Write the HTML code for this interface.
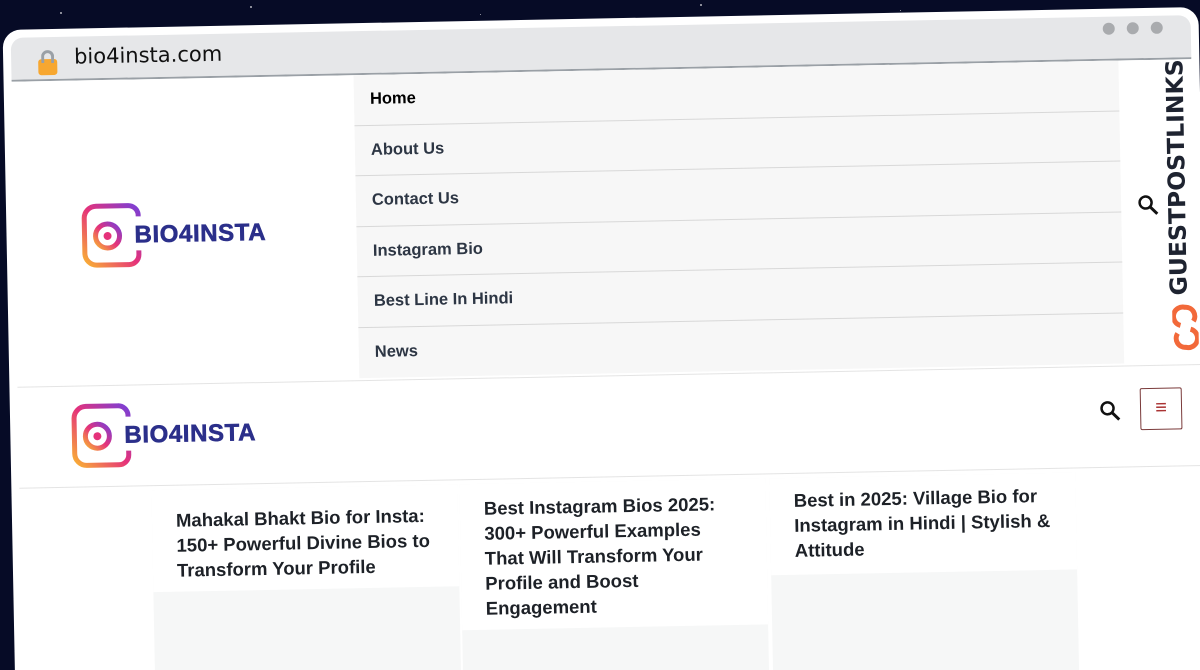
<!DOCTYPE html>
<html style="overflow:hidden;width:1200px;height:670px"><head><meta charset="utf-8"><style>
*{margin:0;padding:0;box-sizing:border-box}
body{width:1200px;height:670px;overflow:hidden;background:#060b26;font-family:"Liberation Sans",sans-serif;position:relative}
.star{position:absolute;background:#fff;border-radius:50%;opacity:.7}
#f{position:absolute;left:0;top:0;width:1200px;height:720px;overflow:hidden;transform-origin:0 0;transform:rotate(-1.1deg)}
.frame{position:absolute;left:2px;top:30px;width:1196px;height:720px;background:#fff;border-radius:18px}
.bar{position:absolute;left:10px;top:38px;width:1180px;height:44px;background:#e6e7e9;border-radius:12px 12px 0 0;border-bottom:2px solid #9aa0a6}
.url{position:absolute;left:73px;top:46px;font-size:21px;color:#111;font-family:"DejaVu Sans","Liberation Sans",sans-serif}
.lock{position:absolute;left:37px;top:60px;width:19px;height:16px;background:#f7a730;border-radius:3px}
.lock:before{content:"";position:absolute;left:3px;top:-9px;width:13px;height:13px;border:3px solid #9aa0a6;border-bottom:none;border-radius:7px 7px 0 0;box-sizing:border-box}
.dot{position:absolute;top:44px;width:12px;height:12px;border-radius:50%;background:#a9abae}
.menu{position:absolute;left:352px;top:82px;width:765px;height:303px;background:#f7f7f7}
.mi{height:50.5px;border-bottom:1px solid #d8d8d8;padding-left:16px;line-height:48px;font-weight:bold;font-size:16.5px;color:#2d3644}
.mi:first-child{color:#000}
.gpl{position:absolute;left:1159px;top:318px;transform-origin:0 0;transform:rotate(-90deg);font-family:"DejaVu Sans",sans-serif;font-weight:bold;font-size:23.5px;color:#1e2330;white-space:nowrap}
.logo{position:absolute;display:flex;align-items:center}
.lt{font-weight:900;font-size:24px;color:#2b2f8a;font-family:"Liberation Sans",sans-serif;margin-left:-12px;letter-spacing:.6px;-webkit-text-stroke:.6px #2b2f8a}
.h2line{position:absolute;left:10px;width:1185px;height:1px;background:#e4e4e4}
.cards{position:absolute;left:10px;top:488px;width:1185px;height:240px;background:#fff}
.card{position:absolute;top:5px;width:306px;height:240px;background:#f6f7f7}
.ct{background:#fff;padding:22px 24px 14px;font-weight:bold;font-size:18.5px;line-height:25px;color:#1d2127}
.ham{position:absolute;left:1132px;top:410px;width:42px;height:42px;border:1px solid #7a3a3a;border-radius:2px;color:#a33;font-size:20px;text-align:center;line-height:38px}
</style></head><body>
<div class="star" style="left:60px;top:12px;width:2px;height:2px"></div>
<div class="star" style="left:250px;top:6px;width:2px;height:2px"></div>
<div class="star" style="left:480px;top:14px;width:1px;height:1px"></div>
<div class="star" style="left:700px;top:4px;width:2px;height:2px"></div>
<div class="star" style="left:900px;top:10px;width:1px;height:1px"></div>
<div id="f">
<div class="frame"></div>
<div class="bar"></div>
<div class="lock"></div>
<div class="url">bio4insta.com</div>
<div class="dot" style="left:1102px"></div><div class="dot" style="left:1126px"></div><div class="dot" style="left:1150px"></div>
<div class="logo" style="left:76px;top:205px">
<svg width="66" height="66" viewBox="0 0 66 66"><defs><linearGradient id="g" x1="0" y1="1" x2="1" y2="0"><stop offset="0" stop-color="#f9b233"/><stop offset=".5" stop-color="#e5327a"/><stop offset="1" stop-color="#7a3fd6"/></linearGradient></defs><path d="M58 14 V12 A10 10 0 0 0 48 3 H16 A12 12 0 0 0 4 15 V50 A12 12 0 0 0 16 62 H48 A10 10 0 0 0 58 52 V48" fill="none" stroke="url(#g)" stroke-width="5"/><circle cx="27" cy="33" r="12" fill="none" stroke="url(#g)" stroke-width="5"/><circle cx="27" cy="33" r="4" fill="#e5327a"/></svg>
<span class="lt">BIO4INSTA</span></div>
<div class="menu">
<div class="mi">Home</div><div class="mi">About Us</div><div class="mi">Contact Us</div><div class="mi">Instagram Bio</div><div class="mi">Best Line In Hindi</div><div class="mi" style="border:none">News</div>
</div>
<svg style="position:absolute;left:1133px;top:216px" width="22" height="22" viewBox="0 0 22 22"><circle cx="8.5" cy="8.5" r="6" fill="none" stroke="#111" stroke-width="2.5"/><path d="M13 13 L20 20" stroke="#111" stroke-width="3"/></svg>
<div class="gpl">GUESTPOSTLINKS</div>
<svg style="position:absolute;left:1166px;top:326px" width="26" height="48" viewBox="0 0 26 48"><path d="M8 22 A9 9 0 0 1 13 4 A9 9 0 0 1 21 18 M18 26 A9 9 0 0 1 13 44 A9 9 0 0 1 5 30" fill="none" stroke="#f2693a" stroke-width="5"/></svg>
<div class="h2line" style="top:387px"></div>
<div class="logo" style="left:62px;top:405px">
<svg width="66" height="66" viewBox="0 0 66 66"><path d="M58 14 V12 A10 10 0 0 0 48 3 H16 A12 12 0 0 0 4 15 V50 A12 12 0 0 0 16 62 H48 A10 10 0 0 0 58 52 V48" fill="none" stroke="url(#g)" stroke-width="5"/><circle cx="27" cy="33" r="12" fill="none" stroke="url(#g)" stroke-width="5"/><circle cx="27" cy="33" r="4" fill="#e5327a"/></svg>
<span class="lt">BIO4INSTA</span></div>
<svg style="position:absolute;left:1091px;top:421px" width="22" height="22" viewBox="0 0 22 22"><circle cx="8.5" cy="8.5" r="6" fill="none" stroke="#111" stroke-width="2.5"/><path d="M13 13 L20 20" stroke="#111" stroke-width="3"/></svg>
<div class="ham">≡</div>
<div class="cards">
<div class="h2line" style="top:0;left:0"></div>
<div class="card" style="left:132px"><div class="ct" style="height:102px;padding-top:18px">Mahakal Bhakt Bio for Insta: 150+ Powerful Divine Bios to Transform Your Profile</div></div>
<div class="card" style="left:440px"><div class="ct" style="height:146px;padding-top:12px">Best Instagram Bios 2025: 300+ Powerful Examples That Will Transform Your Profile and Boost Engagement</div></div>
<div class="card" style="left:750px"><div class="ct" style="height:97px;padding-top:10px">Best in 2025: Village Bio for Instagram in Hindi | Stylish &amp; Attitude</div></div>
</div>
</div>
</body></html>
